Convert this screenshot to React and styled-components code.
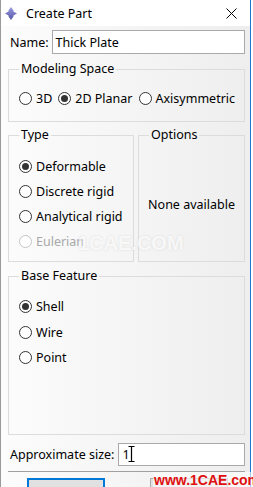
import React from "react";
import styled, { createGlobalStyle } from "styled-components";

const Global = createGlobalStyle`
  html, body { margin: 0; padding: 0; background: #ffffff; }
  body { font-family: "Noto Sans", "Liberation Sans", sans-serif; font-size: 12px; color: #000; white-space: nowrap; }
`;

const Page = styled.div`
  width: 253px;
  height: 487px;
  overflow: hidden;
  position: relative;
  background: #ffffff;
`;

const Window = styled.div`
  width: 251px;
  height: 487px;
  box-sizing: border-box;
  border-left: 1px solid #9a9a9a;
  border-right: 1px solid #1f74d0;
  display: flex;
  flex-direction: column;
  background: linear-gradient(to right, #fcfcfc, #eeeeee);
`;

const TitleBar = styled.div`
  height: 26px;
  flex: none;
  background: #ffffff;
  display: flex;
  align-items: center;
  padding-left: 4px;
  gap: 9px;
  font-size: 12.5px;
`;

const TitleText = styled.span`
  flex: 1;
`;

const Close = styled.div`
  width: 30px;
  margin-right: 4px;
  height: 26px;
  display: flex;
  align-items: center;
  justify-content: center;
`;

const Body = styled.div`
  padding: 4px 5px 0 7px;
  display: flex;
  flex-direction: column;
`;

const FieldRow = styled.div`
  display: flex;
  align-items: center;
  flex: none;
  height: ${(p) => p.h}px;
  gap: ${(p) => p.gap}px;
  margin-top: ${(p) => p.mt || 0}px;
  padding-left: 2px;
  font-size: 12.5px;
`;

const TextBox = styled.div`
  flex: 1;
  height: 100%;
  box-sizing: border-box;
  border: 1px solid #a9a9a9;
  background: #ffffff;
  display: flex;
  align-items: center;
  padding-left: 3px;
  font-size: 12.5px;
`;

const Group = styled.fieldset`
  margin: ${(p) => p.mt || 0}px 0 0 0;
  padding: 0 10px ${(p) => p.pb}px 10px;
  border: 1px solid #dcdcdc;
  width: ${(p) => (p.w ? `${p.w}px` : "auto")};
  box-sizing: border-box;
  min-width: 0;
  flex: ${(p) => (p.w ? "none" : "1")};
`;

const Legend = styled.legend`
  padding: 0 2px;
  font-size: 12.5px;
  line-height: 14px;
  height: 14px;
`;

const Columns = styled.div`
  display: flex;
  gap: 4px;
  margin-top: 6px;
`;

const RadioRow = styled.div`
  display: flex;
  gap: ${(p) => p.gap || 0}px;
  margin-top: ${(p) => p.mt}px;
  flex-direction: ${(p) => (p.vertical ? "column" : "row")};
`;

const Option = styled.label`
  display: flex;
  align-items: center;
  gap: 4px;
  height: ${(p) => p.h || 25}px;
  font-size: 12.5px;
  color: ${(p) => (p.disabled ? "#a8a8a8" : "#000")};
`;

const Circle = styled.span`
  flex: none;
  width: 13px;
  height: 13px;
  box-sizing: border-box;
  border-radius: 50%;
  border: 1px solid ${(p) => (p.disabled ? "#c4c4c4" : "#333333")};
  background: #ffffff;
  display: flex;
  align-items: center;
  justify-content: center;
  &::after {
    content: "";
    width: 7px;
    height: 7px;
    border-radius: 50%;
    background: #333333;
    display: ${(p) => (p.checked ? "block" : "none")};
  }
`;

const Center = styled.div`
  height: 119px;
  box-sizing: border-box;
  padding-top: 6px;
  display: flex;
  align-items: center;
  justify-content: center;
  font-size: 12.5px;
`;

const Separator = styled.div`
  height: 1px;
  background: #a0a0a0;
  margin-top: 5px;
`;

const Buttons = styled.div`
  display: flex;
  gap: 45px;
  padding-left: 19px;
  margin-top: 6px;
`;

const Button = styled.div`
  width: 78px;
  height: 24px;
  box-sizing: border-box;
  border: ${(p) => (p.primary ? "2px solid #0078d7" : "1px solid #adadad")};
  background: #e1e1e1;
  display: flex;
  justify-content: center;
  padding-top: 5px;
  font-size: 12.5px;
`;

const Watermark = styled.div`
  position: absolute;
  left: 78px;
  top: 232px;
  font-family: "Liberation Sans", sans-serif;
  font-weight: bold;
  font-size: 20px;
  color: rgba(255, 255, 255, 0.8);
  text-shadow: 0 0 2px rgba(190, 190, 190, 0.5);
`;

const RedMark = styled.div`
  position: absolute;
  left: 153px;
  top: 472px;
  font-family: "Liberation Sans", sans-serif;
  font-weight: bold;
  font-size: 14px;
  color: #e01010;
  background: rgba(255, 255, 255, 0.6);
  padding: 0 1px;
`;

const Radio = ({ label, checked, disabled, h }) => (
  <Option disabled={disabled} h={h}>
    <Circle checked={checked} disabled={disabled} />
    {label}
  </Option>
);

const AppIcon = () => (
  <svg width="12" height="13" viewBox="0 0 12 13">
    <defs>
      <linearGradient id="ig" x1="0" y1="0" x2="0" y2="1">
        <stop offset="0" stopColor="#9a9ae0" />
        <stop offset="1" stopColor="#5656a8" />
      </linearGradient>
    </defs>
    <polygon points="6,0 8.5,3.5 8.5,4.5 12,6.5 8.5,8.5 8.5,9.5 6,13 3.5,9.5 3.5,8.5 0,6.5 3.5,4.5 3.5,3.5" fill="url(#ig)" />
  </svg>
);

const CloseIcon = () => (
  <svg width="11" height="11" viewBox="0 0 11 11">
    <path d="M0.5 0.5 L10.5 10.5 M10.5 0.5 L0.5 10.5" stroke="#000" strokeWidth="1" />
  </svg>
);

const IBeam = () => (
  <svg width="7" height="16" viewBox="0 0 7 16" style={{ marginLeft: -2 }}>
    <path d="M0.5 0.5 H6.5 M3.5 0.5 V15.5 M0.5 15.5 H6.5" stroke="#000" strokeWidth="1.2" fill="none" />
  </svg>
);

export default function App() {
  return (
    <Page>
      <Global />
      <Window>
        <TitleBar>
          <AppIcon />
          <TitleText>Create Part</TitleText>
          <Close>
            <CloseIcon />
          </Close>
        </TitleBar>
        <Body>
          <FieldRow h={24} gap={3}>
            Name:
            <TextBox>Thick Plate</TextBox>
          </FieldRow>

          <Group mt={8} pb={10}>
            <Legend>Modeling Space</Legend>
            <RadioRow mt={10} gap={6}>
              <Radio label="3D" />
              <Radio label="2D Planar" checked />
              <Radio label="Axisymmetric" />
            </RadioRow>
          </Group>

          <Columns>
            <Group w={126} pb={7}>
              <Legend>Type</Legend>
              <RadioRow vertical mt={12}>
                <Radio label="Deformable" checked />
                <Radio label="Discrete rigid" />
                <Radio label="Analytical rigid" />
                <Radio label="Eulerian" disabled />
              </RadioRow>
            </Group>
            <Group pb={0}>
              <Legend>Options</Legend>
              <Center>None available</Center>
            </Group>
          </Columns>

          <Group mt={7} pb={63}>
            <Legend>Base Feature</Legend>
            <RadioRow vertical mt={11}>
              <Radio label="Shell" checked h={25.5} />
              <Radio label="Wire" h={25.5} />
              <Radio label="Point" h={25.5} />
            </RadioRow>
          </Group>

          <FieldRow h={23} gap={4} mt={8}>
            Approximate size:
            <TextBox>
              1
              <IBeam />
            </TextBox>
          </FieldRow>

          <Separator />

          <Buttons>
            <Button primary>Continue...</Button>
            <Button>Cancel</Button>
          </Buttons>
        </Body>
      </Window>
      <Watermark>1CAE.COM</Watermark>
      <RedMark>www.1CAE.com</RedMark>
    </Page>
  );
}
